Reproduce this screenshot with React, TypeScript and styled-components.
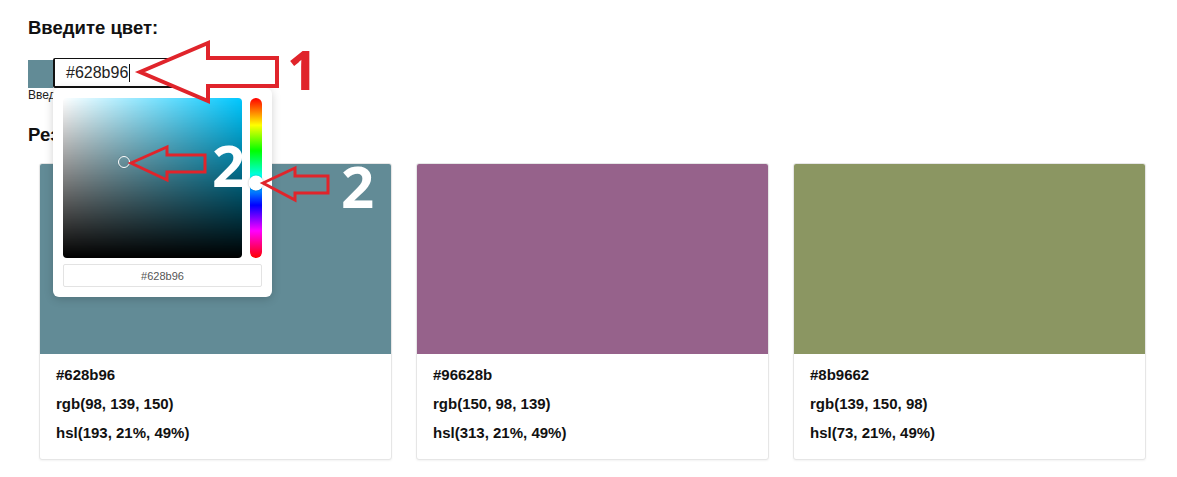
import styled, { createGlobalStyle } from "styled-components";

const GlobalStyle = createGlobalStyle`
  body {
    margin: 0;
    background: #ffffff;
    font-family: "Liberation Sans", Arial, sans-serif;
    color: #111;
  }
`;

const Page = styled.main`
  position: relative;
  width: 1177px;
  height: 477px;
  padding: 17px 19px 0 28px;
  box-sizing: border-box;
  overflow: hidden;
`;

const Title = styled.h2`
  margin: 0;
  font-size: 18.5px;
  line-height: 21px;
  font-weight: 700;
`;

const InputRow = styled.div`
  display: flex;
  align-items: flex-end;
  margin-top: 20px;
`;

const Swatch = styled.div<{ $color: string }>`
  width: 25px;
  height: 28px;
  background: ${(p) => p.$color};
`;

const Field = styled.div`
  position: relative;
`;

const TextInput = styled.div`
  width: 150px;
  height: 30px;
  box-sizing: border-box;
  border: 1px solid #111;
  border-width: 1px 1px 2px 2px;
  border-radius: 2px;
  padding: 0 0 0 11px;
  display: flex;
  align-items: center;
  font-size: 16px;
  color: #222;
`;

const Caret = styled.span`
  display: inline-block;
  width: 1px;
  height: 18px;
  background: #111;
  margin-left: 1px;
`;

const Hint = styled.div`
  font-size: 12px;
  line-height: 14px;
  color: #222;
  margin-top: 0;
`;

const Picker = styled.div`
  position: absolute;
  top: 30px;
  left: 0;
  width: 219px;
  height: 209px;
  box-sizing: border-box;
  padding: 10px;
  background: #fff;
  border-radius: 6px;
  box-shadow: 0 2px 10px rgba(0, 0, 0, 0.18);
  z-index: 2;
  display: flex;
  flex-direction: column;
  gap: 6px;
`;

const PickerTop = styled.div`
  display: flex;
  gap: 8px;
`;

const Saturation = styled.div<{ $hue: number }>`
  position: relative;
  width: 180px;
  height: 160px;
  border-radius: 4px;
  background: linear-gradient(to top, #000, rgba(0, 0, 0, 0)),
    linear-gradient(to right, #fff, hsl(${(p) => p.$hue}, 100%, 50%));
`;

const SatPointer = styled.div`
  position: absolute;
  width: 10px;
  height: 10px;
  border: 1.5px solid #fff;
  border-radius: 50%;
  transform: translate(-50%, -50%);
  box-shadow: 0 0 1px rgba(0, 0, 0, 0.4);
`;

const Hue = styled.div`
  position: relative;
  width: 12px;
  height: 160px;
  border-radius: 6px;
  background: linear-gradient(
    to bottom,
    #ff0000 0%,
    #ffff00 17%,
    #00ff00 33%,
    #00ffff 50%,
    #0000ff 67%,
    #ff00ff 83%,
    #ff0000 100%
  );
`;

const HueThumb = styled.div`
  position: absolute;
  left: 50%;
  width: 15px;
  height: 15px;
  border-radius: 50%;
  background: #fff;
  transform: translate(-50%, -50%);
  box-shadow: 0 0 2px rgba(0, 0, 0, 0.3);
`;

const HexBox = styled.div`
  height: 23px;
  border: 1px solid #e3e3e3;
  border-radius: 2px;
  display: flex;
  align-items: center;
  justify-content: center;
  font-size: 11px;
  color: #555;
`;

const Subtitle = styled(Title)`
  margin-top: 22px;
`;

const Grid = styled.div`
  display: grid;
  grid-template-columns: repeat(3, 353px);
  gap: 24px;
  margin: 18px 0 0 11px;
`;

const Card = styled.div`
  border: 1px solid #e6e6e6;
  border-radius: 3px;
  overflow: hidden;
  background: #fff;
  box-shadow: 0 1px 2px rgba(0, 0, 0, 0.05);
`;

const ColorBlock = styled.div<{ $color: string }>`
  height: 190px;
  background: ${(p) => p.$color};
`;

const Info = styled.div`
  padding: 12px 16px 18px;
  display: flex;
  flex-direction: column;
  gap: 12px;
  font-size: 15px;
  line-height: 17px;
  font-weight: 700;
  color: #111;
`;

const Notes = styled.svg`
  position: absolute;
  left: 0;
  top: 0;
  width: 1177px;
  height: 477px;
  pointer-events: none;
  z-index: 5;
`;

const colors = [
  { hex: "#628b96", rgb: "rgb(98, 139, 150)", hsl: "hsl(193, 21%, 49%)" },
  { hex: "#96628b", rgb: "rgb(150, 98, 139)", hsl: "hsl(313, 21%, 49%)" },
  { hex: "#8b9662", rgb: "rgb(139, 150, 98)", hsl: "hsl(73, 21%, 49%)" },
];

const App = () => {
  return (
    <>
      <GlobalStyle />
      <Page>
        <Title>Введите цвет:</Title>
        <InputRow>
          <Swatch $color="#628b96" />
          <Field>
            <TextInput>
              #628b96
              <Caret />
            </TextInput>
            <Picker>
              <PickerTop>
                <Saturation $hue={193}>
                  <SatPointer style={{ left: 61, top: 64 }} />
                </Saturation>
                <Hue>
                  <HueThumb style={{ top: 85 }} />
                </Hue>
              </PickerTop>
              <HexBox>#628b96</HexBox>
            </Picker>
          </Field>
        </InputRow>
        <Hint>Введите код цвета или выберите его сбоку</Hint>
        <Subtitle>Результат:</Subtitle>
        <Grid>
          {colors.map((c) => (
            <Card key={c.hex}>
              <ColorBlock $color={c.hex} />
              <Info>
                <div>{c.hex}</div>
                <div>{c.rgb}</div>
                <div>{c.hsl}</div>
              </Info>
            </Card>
          ))}
        </Grid>

        <Notes viewBox="0 0 1177 477">
          <path
            d="M140 72 L208 43 L208 58 L277 58 L277 86 L208 86 L208 101 Z"
            fill="#fff"
            stroke="#e0242b"
            strokeWidth="4"
            strokeLinejoin="miter"
          />
          <text
            x="287"
            y="90"
            fill="#e0242b"
            fontFamily="'Open Sans', 'DejaVu Sans', sans-serif"
            fontWeight="700"
            fontSize="54"
          >
            1
          </text>
          <path
            d="M131 163 L167 147 L167 155 L205 155 L205 172 L167 172 L167 180 Z"
            fill="none"
            stroke="#e0242b"
            strokeWidth="3"
          />
          <text
            x="212"
            y="187"
            fill="#fff"
            fontFamily="'Open Sans', 'DejaVu Sans', sans-serif"
            fontWeight="700"
            fontSize="58"
          >
            2
          </text>
          <path
            d="M263 183 L295 168 L295 176 L328 176 L328 193 L295 193 L295 200 Z"
            fill="none"
            stroke="#e0242b"
            strokeWidth="3"
          />
          <text
            x="341"
            y="208"
            fill="#fff"
            fontFamily="'Open Sans', 'DejaVu Sans', sans-serif"
            fontWeight="700"
            fontSize="58"
          >
            2
          </text>
        </Notes>
      </Page>
    </>
  );
};

export default App;
